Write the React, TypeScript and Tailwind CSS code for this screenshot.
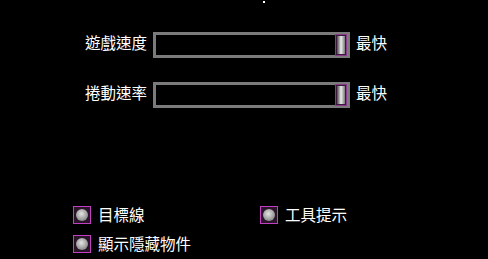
import React from "react";

const font = { fontFamily: '"Noto Sans CJK TC", "Noto Sans CJK SC", sans-serif' };

function Slider({ label }: { label: string }) {
  return (
    <div className="flex items-center h-[26px]">
      <span className="w-[147px] text-right text-white text-[15.5px] leading-none -mt-[4px]">{label}</span>
      <div className="ml-[6px] w-[197px] h-[26px] border-[3px] border-[#7b7b7b] flex items-center justify-end">
        <div className="w-[12px] h-[22px] border border-[#8a3a8a] bg-[#3a1a3a] p-[1px]">
          <div className="w-full h-full bg-linear-to-r from-[#4a4a4a] via-[#eeeeee] to-[#7a7a7a]" />
        </div>
      </div>
      <span className="ml-[6px] text-white text-[15.5px] leading-none -mt-[4px]">最快</span>
    </div>
  );
}

function Check({ label }: { label: string }) {
  return (
    <div className="flex items-center h-[18px]">
      <div className="w-[18px] h-[18px] border border-[#c040c0] bg-[#2a142a] flex items-center justify-center">
        <div className="w-[12px] h-[12px] rounded-full bg-[radial-gradient(circle_at_45%_40%,#e4e4e4,#9a9a9a_60%,#6a6a6a)]" />
      </div>
      <span className="ml-[7px] text-white text-[15.5px] leading-none">{label}</span>
    </div>
  );
}

export default function App() {
  return (
    <div className="w-[488px] h-[259px] bg-black overflow-hidden" style={font}>
      <div className="ml-[263px] mt-[1px] w-[2px] h-[2px] bg-white" />
      <div className="mt-[29px] flex flex-col gap-[24px]">
        <Slider label="遊戲速度" />
        <Slider label="捲動速率" />
      </div>
      <div className="mt-[98px] ml-[73px] flex flex-col gap-[11px]">
        <div className="flex">
          <div className="w-[187px]">
            <Check label="目標線" />
          </div>
          <Check label="工具提示" />
        </div>
        <Check label="顯示隱藏物件" />
      </div>
    </div>
  );
}
